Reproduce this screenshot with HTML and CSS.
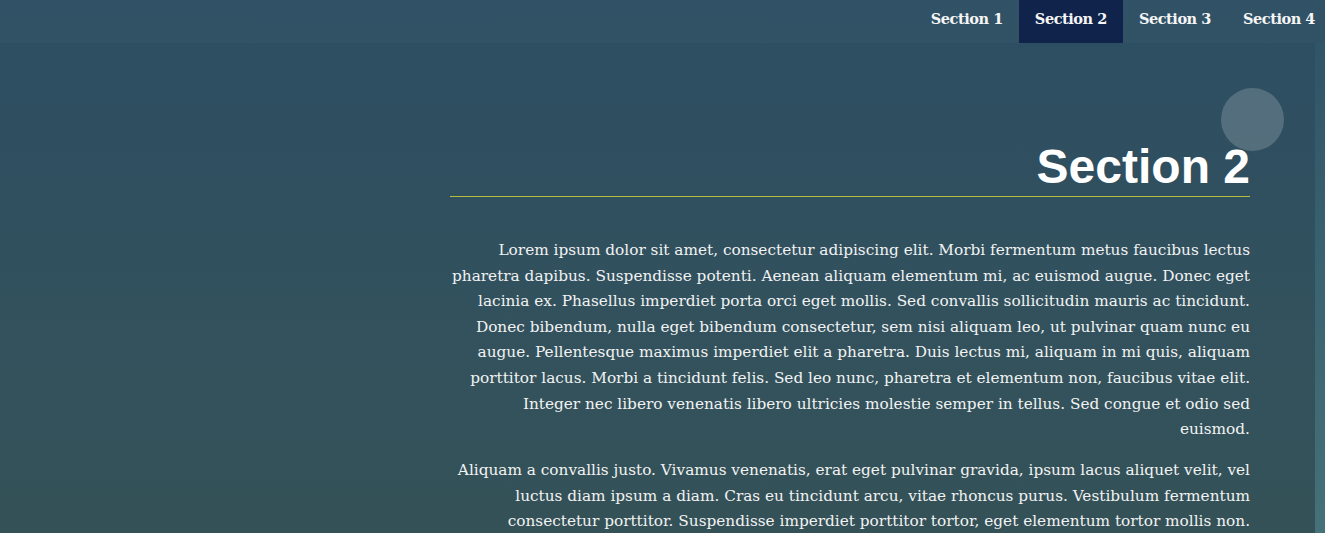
FILE: index.html
```html
<!DOCTYPE html>
<html lang="en">
<head>
<meta charset="utf-8">
<title>Section 2</title>
<link rel="stylesheet" href="styles.css">
</head>
<body>
<nav class="topnav">
  <ul class="nav-list">
    <li><a class="nav-link" href="#s1">Section 1</a></li>
    <li><a class="nav-link active" href="#s2">Section 2</a></li>
    <li><a class="nav-link" href="#s3">Section 3</a></li>
    <li><a class="nav-link" href="#s4">Section 4</a></li>
  </ul>
</nav>
<div class="layout">
  <main class="main">
    <section class="section" id="s2">
      <h2 class="section-title">Section 2</h2>
      <p class="para">Lorem ipsum dolor sit amet, consectetur adipiscing elit. Morbi fermentum metus faucibus lectus<br>
pharetra dapibus. Suspendisse potenti. Aenean aliquam elementum mi, ac euismod augue. Donec eget<br>
lacinia ex. Phasellus imperdiet porta orci eget mollis. Sed convallis sollicitudin mauris ac tincidunt.<br>
Donec bibendum, nulla eget bibendum consectetur, sem nisi aliquam leo, ut pulvinar quam nunc eu<br>
augue. Pellentesque maximus imperdiet elit a pharetra. Duis lectus mi, aliquam in mi quis, aliquam<br>
porttitor lacus. Morbi a tincidunt felis. Sed leo nunc, pharetra et elementum non, faucibus vitae elit.<br>
Integer nec libero venenatis libero ultricies molestie semper in tellus. Sed congue et odio sed<br>
euismod.</p>
      <p class="para">Aliquam a convallis justo. Vivamus venenatis, erat eget pulvinar gravida, ipsum lacus aliquet velit, vel<br>
luctus diam ipsum a diam. Cras eu tincidunt arcu, vitae rhoncus purus. Vestibulum fermentum<br>
consectetur porttitor. Suspendisse imperdiet porttitor tortor, eget elementum tortor mollis non.<br>
Fusce vel ante dapibus, ultrices nisi et, facilisis urna. Morbi non nulla nec lectus tincidunt dictum.</p>
    </section>
  </main>
  <div class="side-strip"></div>
</div>
<div class="bubble"></div>
</body>
</html>
```

FILE: styles.css
```css
html, body {
  margin: 0;
  padding: 0;
  height: 100%;
  overflow: hidden;
}
body {
  background: linear-gradient(180deg, #2d4e63 0%, #30505f 40%, #33525c 70%, #345157 100%);
  font-family: "DejaVu Serif", "Liberation Serif", serif;
  color: #f2f2f2;
}
.topnav {
  height: 43px;
  background: rgba(255, 255, 255, 0.025);
  display: flex;
  justify-content: flex-end;
}
.nav-list {
  list-style: none;
  margin: 0 -6px 0 0;
  padding: 0;
  display: flex;
}
.nav-link {
  display: block;
  height: 43px;
  line-height: 38px;
  padding: 0 16px;
  color: #f6f6f6;
  text-decoration: none;
  font-weight: bold;
  font-size: 14.5px;
  letter-spacing: -0.45px;
}
.nav-link.active {
  background: #10234a;
}
.layout {
  display: flex;
  justify-content: flex-end;
  height: calc(100% - 43px);
}
.main {
  width: 800px;
  margin-right: 65px;
}
.side-strip {
  width: 10px;
  background: linear-gradient(180deg, #305468 0%, #3b6370 50%, #467178 100%);
}
.section {
  padding-top: 96px;
  text-align: right;
}
.section-title {
  font-family: "Liberation Sans", Arial, sans-serif;
  font-weight: bold;
  font-size: 48px;
  line-height: 56px;
  color: #ffffff;
  margin: 0;
  padding-bottom: 1px;
  border-bottom: 1px solid #b4bd3c;
}
.para {
  font-size: 15.3px;
  line-height: 25.6px;
  margin: 41px 0 15.4px;
}
.para + .para {
  margin-top: 0;
}
.bubble {
  position: absolute;
  left: 1221px;
  top: 88px;
  width: 63px;
  height: 63px;
  border-radius: 50%;
  background: rgba(255, 255, 255, 0.18);
}
```
